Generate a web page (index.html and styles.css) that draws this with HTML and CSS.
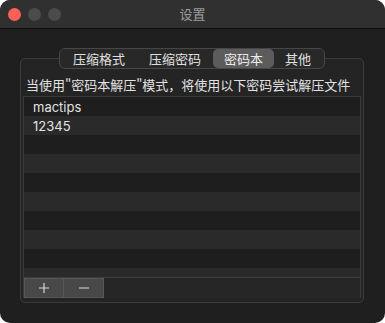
FILE: index.html
```html
<!DOCTYPE html>
<html lang="zh-CN">
<head>
<meta charset="utf-8">
<link rel="stylesheet" href="styles.css">
</head>
<body>
<div class="window">
  <div class="titlebar">
    <div class="lights">
      <span class="light red"></span>
      <span class="light grey"></span>
      <span class="light grey"></span>
    </div>
    <div class="title">设置</div>
    <div></div>
  </div>
  <div class="content">
    <div class="tabs">
      <span class="tab">压缩格式</span>
      <span class="tab">压缩密码</span>
      <span class="tab active">密码本</span>
      <span class="tab">其他</span>
    </div>
    <div class="group">
      <div class="label">当使用"密码本解压"模式，将使用以下密码尝试解压文件</div>
      <div class="table">
        <div class="rows">
          <div class="row">mactips</div>
          <div class="row">12345</div>
          <div class="row"></div>
          <div class="row"></div>
          <div class="row"></div>
          <div class="row"></div>
          <div class="row"></div>
          <div class="row"></div>
          <div class="row"></div>
          <div class="row"></div>
        </div>
        <div class="bar">
          <button class="btn" type="button">
            <svg width="12" height="12" viewBox="0 0 12 12"><path d="M6 1v10M1 6h10" stroke="#d8d8d8" stroke-width="1.2" fill="none"/></svg>
          </button>
          <button class="btn" type="button">
            <svg width="12" height="12" viewBox="0 0 12 12"><path d="M1 6h10" stroke="#d8d8d8" stroke-width="1.2" fill="none"/></svg>
          </button>
        </div>
      </div>
    </div>
  </div>
</div>
</body>
</html>
```
FILE: styles.css
```css
html, body {
  margin: 0;
  padding: 0;
  background: #ffffff;
}
body {
  font-family: "Inter", "Noto Sans CJK SC", sans-serif;
  font-size: 13px;
  color: #dedede;
}
.window {
  width: 385px;
  height: 323px;
  border-radius: 10px;
  overflow: hidden;
  background: #1f1f1f;
  display: flex;
  flex-direction: column;
}
.titlebar {
  height: 28px;
  background: #303030;
  border-bottom: 1px solid #0c0c0c;
  display: grid;
  grid-template-columns: 1fr auto 1fr;
  align-items: center;
  flex: none;
}
.lights {
  display: flex;
  gap: 7px;
  padding-left: 8px;
  padding-top: 1px;
}
.light {
  width: 13px;
  height: 13px;
  border-radius: 50%;
  background: #4b4b4b;
}
.light.red {
  background: #fe5f57;
}
.title {
  font-family: "Noto Sans CJK SC", sans-serif;
  font-size: 13px;
  color: #9d9d9d;
  line-height: 16px;
}
.content {
  padding: 19px 21px 0 20px;
  display: flex;
  flex-direction: column;
  align-items: stretch;
}
.tabs {
  align-self: center;
  position: relative;
  z-index: 1;
  display: flex;
  height: 21px;
  box-sizing: border-box;
  border: 1px solid #474747;
  border-radius: 6px;
  background: #282828;
  padding: 0 1px;
  align-items: center;
  font-family: "Noto Sans CJK SC", sans-serif;
  font-size: 13px;
  color: #e0e0e0;
}
.tab {
  height: 19px;
  line-height: 19px;
  padding: 0 11.5px;
  border-radius: 5px;
}
.tab:first-child {
  padding-left: 11.5px;
  padding-right: 12.5px;
}
.tab.active {
  background: #5c5c5c;
  padding: 0 10.5px 0 11.5px;
  color: #ececec;
}
.group {
  margin-top: -11px;
  height: 245px;
  box-sizing: border-box;
  border: 1px solid #3b3b3b;
  border-radius: 5px;
  background: #242424;
  padding: 18px 2px 4px 2px;
  display: flex;
  flex-direction: column;
}
.label {
  font-family: "Noto Sans CJK SC", sans-serif;
  line-height: 16px;
  padding-left: 3px;
  margin-bottom: 3px;
  color: #e2e2e2;
  white-space: nowrap;
}
.table {
  border: 1px solid #3a3a3a;
  border-bottom: none;
  display: flex;
  flex-direction: column;
  flex: 1;
}
.rows {
  height: 180px;
  overflow: hidden;
  border-bottom: 1px solid #3c3c3c;
}
.row {
  height: 19px;
  line-height: 20px;
  padding-left: 9px;
  background: #1e1e1e;
  color: #e2e2e2;
}
.row:nth-child(even) {
  background: #2a2a2a;
}
.bar {
  display: flex;
  background: #262626;
  flex: 1;
}
.btn {
  width: 40px;
  height: 20px;
  margin: 0;
  padding: 0;
  box-sizing: border-box;
  border: 1px solid #575757;
  background: #484848;
  display: flex;
  align-items: center;
  justify-content: center;
}
.btn + .btn {
  border-left: none;
}
```
